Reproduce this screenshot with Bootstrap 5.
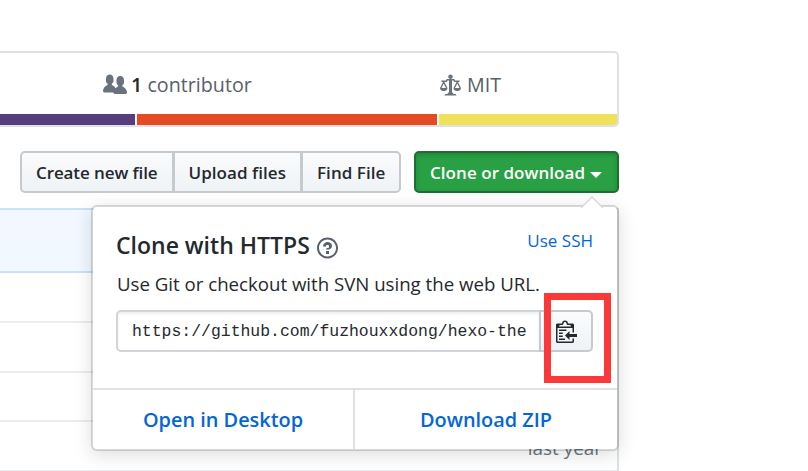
<!DOCTYPE html>
<html lang="en">
<head>
<meta charset="utf-8">
<meta name="viewport" content="width=device-width, initial-scale=1">
<title>Clone or download</title>
<link href="https://cdn.jsdelivr.net/npm/bootstrap@5.3.0/dist/css/bootstrap.min.css" rel="stylesheet">
<style>
  body { font-family: "Open Sans", "Noto Sans", sans-serif; color: #24292e; background: #fff; height: 471px; }
  svg { fill: currentColor; display: block; flex: none; }
  .repo { width: 619px; padding-top: 51px; }
  .summary { height: 76px; border: 2px solid #dfe2e5; border-left: 0; border-radius: 0 5px 5px 0; color: #586069; font-size: 19.7px; overflow: hidden; }
  .summary-items { height: 61px; padding: 3px 116px 0 103px; }
  .summary strong { color: #24292e; font-weight: 600; }
  .summary svg { color: #6a737d; }
  .license { gap: 6px; }
  .langs { height: 11px; gap: 2px; }
  .lang-css { width: 135px; background: #563d7c; }
  .lang-html { width: 300px; background: #e44b23; }
  .lang-js { background: #f1e05a; }
  .actions { padding: 24px 0 0 20px; }
  .gh-btn { height: 42px; padding: 1px 14px 0; border: 2px solid #c6cacd; border-radius: 5px; background: linear-gradient(#fafbfc, #eff3f6); color: #24292e; font-size: 17px; letter-spacing: -.1px; font-weight: 600; line-height: 38px; white-space: nowrap; }
  .btn-group > .gh-btn:not(:first-child) { margin-left: -2px; letter-spacing: .05px; }
  .gh-btn-green, .gh-btn-green:hover { width: 205px; letter-spacing: .05px; background: #28a043; border-color: #1f6d32; color: #fff; box-shadow: inset 0 2px 4px rgba(20,70,32,.3); }
  .gh-btn-green { padding-right: 16px; }
  .gh-btn-green::after { margin-left: 5px; border-top: 6px solid; border-left: 6px solid transparent; border-right: 6px solid transparent; vertical-align: 1px; }
  .files { margin-top: 15px; height: 263px; border-right: 2px solid #dfe2e5; overflow: hidden; }
  .commit-row { height: 65px; background: #f1f8ff; border: solid #c8e1ff; border-width: 2px 0; }
  .file-row { height: 49.5px; border-bottom: 2px solid #eaecef; color: #6a737d; font-size: 18.9px; padding: 5px 15px 0 0; }
  .commit-row + .file-row { height: 50px; }
  .clone-menu { position: absolute; left: 91px; top: 205px; width: 528px; height: 246px; background: #fff; background-clip: padding-box; border: 2px solid rgba(27,31,35,.17); border-radius: 6px; box-shadow: 0 4px 18px rgba(27,31,35,.15); }
  .pointer { position: absolute; right: 14px; top: -11px; color: #fff; }
  .clone-body { height: 181px; padding: 21px 24px 0 23px; }
  .clone-title { font-size: 23px; font-weight: 600; line-height: 34px; }
  .clone-title svg { margin: 5px 0 0 7px; }
  .clone-body p { margin: 8px 0 0 1px; font-size: 18.65px; line-height: 28px; white-space: nowrap; }
  .gh-link { color: #0366d6; text-decoration: none; }
  .ssh { font-size: 17px; }
  .url-row { margin-top: 12px; height: 42px; }
  .url-box { width: 425px; flex: none; border: 2px solid #d1d5da; border-radius: 5px 0 0 5px; padding: 1px 13px 0 14px; font: 16.45px/38px "Liberation Mono", monospace; box-shadow: inset 0 2px 3px rgba(27,31,35,.075); overflow: hidden; white-space: nowrap; color: #24292e; }
  .copy-btn { width: 54px; margin-left: -2px; padding: 0 0 0 15px; border-radius: 0 5px 5px 0; }
  .copy-btn svg { margin-top: -1px; }
  .clone-foot { height: 61px; border-top: 2px solid #dfe2e5; font-size: 19.9px; font-weight: 600; }
  .clone-foot a { padding-top: 1px; }
  .clone-foot a:first-child { border-right: 2px solid #dfe2e5; }
  .highlight-box { position: absolute; left: 544px; top: 293px; width: 67px; height: 90px; border: 7px solid #fc3838; }
</style>
</head>
<body class="position-relative overflow-hidden">
<main class="repo">
  <section class="summary">
    <div class="summary-items d-flex justify-content-between align-items-center">
      <div class="d-flex align-items-center">
        <svg width="24" height="24" viewBox="0 0 16 16"><path d="M16 12.999c0 .439-.45 1-1 1H7.995c-.539 0-.994-.447-.995-.999H1c-.54 0-1-.561-1-1 0-2.634 3-4 3-4s.229-.409 0-1c-.841-.621-1.058-.59-1-3 .058-2.419 1.367-3 2.500-3s2.442.58 2.500 3c.058 2.410-.159 2.379-1 3-.229.590 0 1 0 1s1.549.711 2.420 2.088C9.196 9.369 10 8.999 10 8.999s.229-.409 0-1c-.841-.620-1.058-.590-1-3 .058-2.419 1.367-3 2.500-3s2.437.581 2.495 3c.059 2.410-.158 2.380-1 3-.229.590 0 1 0 1s3.005 1.366 3.005 4"/></svg>
        <span class="ms-1"><strong>1</strong> contributor</span>
      </div>
      <div class="license d-flex align-items-center">
        <svg width="21" height="24" viewBox="0 0 14 16"><path d="M7 4c-.83 0-1.500-.67-1.500-1.500S6.170 1 7 1s1.500.67 1.500 1.500S7.830 4 7 4zm7 6c0 1.110-.89 2-2 2h-1c-1.110 0-2-.89-2-2l2-4h-1c-.55 0-1-.45-1-1H8v8c.42 0 1 .45 1 1h1c.42 0 1 .45 1 1H3c0-.55.58-1 1-1h1c0-.55.58-1 1-1h.03L6 5H5c0 .55-.45 1-1 1H3l2 4c0 1.110-.89 2-2 2H2c-1.110 0-2-.89-2-2l2-4H1V5h3c0-.55.45-1 1-1h4c.55 0 1 .45 1 1h3v1h-1l2 4zM2.500 7L1 10h3L2.500 7zM13 10l-1.500-3-1.500 3h3z"/></svg>
        <span>MIT</span>
      </div>
    </div>
    <div class="langs d-flex">
      <div class="lang-css"></div><div class="lang-html"></div><div class="lang-js flex-fill"></div>
    </div>
  </section>

  <div class="actions d-flex justify-content-between">
    <div class="btn-group">
      <button class="btn gh-btn">Create new file</button>
      <button class="btn gh-btn">Upload files</button>
      <button class="btn gh-btn">Find File</button>
    </div>
    <button class="btn gh-btn gh-btn-green dropdown-toggle">Clone or download</button>
  </div>

  <section class="files">
    <div class="commit-row"></div>
    <div class="file-row"></div>
    <div class="file-row"></div>
    <div class="file-row"></div>
    <div class="file-row d-flex align-items-center justify-content-end">last year</div>
  </section>
</main>

<div class="clone-menu">
  <svg class="pointer" width="22" height="13" viewBox="0 0 22 13"><path d="M0 12 11 1l11 11v1H0z"/><path d="M0 12 11 1l11 11" fill="none" stroke="#d8dadb" stroke-width="1.500"/></svg>
  <div class="clone-body">
    <div class="d-flex justify-content-between">
      <div class="clone-title d-flex align-items-center">Clone with HTTPS
        <svg width="21" height="24" viewBox="0 0 14 16" color="#586069"><path d="M6 10h2v2H6v-2zm4-3.500C10 8.640 8 9 8 9H6c0-.55.45-1 1-1h.5c.28 0 .5-.22.5-.5v-1c0-.28-.22-.5-.5-.5h-1c-.28 0-.5.22-.5.5V7H4c0-1.500 1.500-3 3-3s3 1 3 2.500zM7 2.300c3.140 0 5.700 2.560 5.700 5.700s-2.560 5.700-5.700 5.700A5.710 5.710 0 0 1 1.300 8c0-3.140 2.560-5.700 5.700-5.700zM7 1C3.140 1 0 4.140 0 8s3.140 7 7 7 7-3.140 7-7-3.140-7-7-7z"/></svg>
      </div>
      <a class="gh-link ssh" href="#">Use SSH</a>
    </div>
    <p>Use Git or checkout with SVN using the web URL.</p>
    <div class="url-row d-flex">
      <div class="url-box">https://github.com/fuzhouxxdong/hexo-the</div>
      <button class="btn gh-btn copy-btn" aria-label="Copy"><svg width="21" height="24" viewBox="0 0 14 16"><path d="M2 13h4v1H2v-1zm5-6H2v1h5V7zm2 3V8l-3 3 3 3v-2h5v-2H9zM4.500 9H2v1h2.500V9zM2 12h2.500v-1H2v1zm9 1h1v2c-.02.28-.11.52-.3.7-.19.18-.42.28-.7.3H1c-.55 0-1-.45-1-1V4c0-.55.45-1 1-1h3c0-1.110.89-2 2-2 1.110 0 2 .89 2 2h3c.55 0 1 .45 1 1v5h-1V6H1v9h10v-2zM2 5h8c0-.55-.45-1-1-1H8c-.55 0-1-.45-1-1s-.45-1-1-1-1 .45-1 1-.45 1-1 1H3c-.55 0-1 .45-1 1z"/></svg></button>
    </div>
  </div>
  <div class="clone-foot d-flex text-center">
    <a class="gh-link w-50 d-flex align-items-center justify-content-center" href="#">Open in Desktop</a>
    <a class="gh-link w-50 d-flex align-items-center justify-content-center" href="#">Download ZIP</a>
  </div>
</div>
<div class="highlight-box"></div>
<script src="https://cdn.jsdelivr.net/npm/bootstrap@5.3.0/dist/js/bootstrap.bundle.min.js"></script>
</body>
</html>
